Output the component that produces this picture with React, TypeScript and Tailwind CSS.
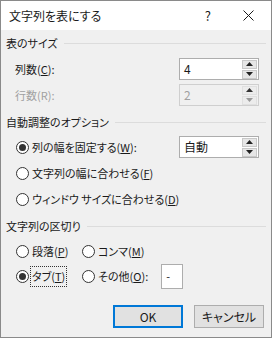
import React from 'react';

const font = "font-['Meiryo_UI','Noto_Sans_CJK_JP',sans-serif] [font-feature-settings:'palt']";

function Radio({ checked = false }: { checked?: boolean }) {
  return (
    <span className="w-[13px] h-[13px] rounded-full border border-[#333] bg-white flex items-center justify-center shrink-0">
      {checked && <span className="w-[7px] h-[7px] rounded-full bg-[#333]"></span>}
    </span>
  );
}

function GroupHeader({ label, className }: { label: string; className?: string }) {
  return (
    <div className={`flex items-center pl-[5px] pr-[5px] ${className ?? ''}`}>
      <span className="text-[#1a1a1a] mr-[6px]">{label}</span>
      <div className="flex-1 h-px bg-[#dcdcdc]"></div>
    </div>
  );
}

function Spin({ disabled = false }: { disabled?: boolean }) {
  return (
    <div className="flex flex-col w-[15px] h-[19px] gap-[1px] mr-[1px]">
      <div className={`flex-1 flex items-center justify-center border ${disabled ? 'border-[#e0e0e0] bg-[#ececec]' : 'border-[#c8c8c8] bg-[#e6e6e6]'}`}>
        <svg width="7" height="4" viewBox="0 0 7 4">
          <path d="M0 4 L3.5 0 L7 4 Z" fill={disabled ? '#333' : '#222'} />
        </svg>
      </div>
      <div className={`flex-1 flex items-center justify-center border ${disabled ? 'border-[#e0e0e0] bg-[#ececec]' : 'border-[#c8c8c8] bg-[#e6e6e6]'}`}>
        <svg width="7" height="4" viewBox="0 0 7 4">
          <path d="M0 0 L7 0 L3.5 4 Z" fill={disabled ? '#9a9a9a' : '#222'} />
        </svg>
      </div>
    </div>
  );
}

function SpinBox({ value, disabled = false }: { value: string; disabled?: boolean }) {
  return (
    <div className={`w-[80px] h-[22px] border flex items-center text-[12px] ${disabled ? 'border-[#cfcfcf] bg-[#f0f0f0] text-[#a0a0a0]' : 'border-[#adadad] bg-white text-[#1a1a1a]'}`}>
      <span className="flex-1 pl-[4px]">{value}</span>
      <Spin disabled={disabled} />
    </div>
  );
}

export default function App() {
  return (
    <div className={`w-[272px] h-[338px] border border-[#8a8a8a] bg-[#f0f0f0] flex flex-col text-[11px] leading-none ${font}`}>
      {/* Title bar */}
      <div className="h-[29px] bg-white flex items-center pl-[8px] text-[#1a1a1a]">
        <span className="text-[12px]">文字列を表にする</span>
        <span className="ml-auto mr-[32px] text-[13px]">?</span>
        <svg width="11" height="11" viewBox="0 0 11 11" className="mr-[17px]">
          <path d="M0.5 0.5 L10.5 10.5 M10.5 0.5 L0.5 10.5" stroke="#1a1a1a" strokeWidth="1" />
        </svg>
      </div>

      <GroupHeader label="表のサイズ" className="h-[26px]" />

      <div className="mt-[2px] flex items-center pl-[14px] pr-[12px]">
        <span className="text-[#1a1a1a]">列数(<u>C</u>):</span>
        <div className="ml-auto"><SpinBox value="4" /></div>
      </div>
      <div className="mt-[4px] flex items-center pl-[14px] pr-[12px]">
        <span className="text-[#a0a0a0]">行数(R):</span>
        <div className="ml-auto"><SpinBox value="2" disabled /></div>
      </div>

      <GroupHeader label="自動調整のオプション" className="mt-[6px] h-[20px]" />

      <div className="mt-[4px] flex items-center pl-[15px] pr-[12px]">
        <Radio checked />
        <span className="ml-[3px] text-[#1a1a1a]">列の幅を固定する(<u>W</u>):</span>
        <div className="ml-auto"><SpinBox value="自動" /></div>
      </div>
      <div className="mt-[5px] h-[20px] flex items-center pl-[15px]">
        <Radio />
        <span className="ml-[3px] text-[#1a1a1a]">文字列の幅に合わせる(<u>F</u>)</span>
      </div>
      <div className="mt-[6px] h-[20px] flex items-center pl-[15px]">
        <Radio />
        <span className="ml-[3px] text-[#1a1a1a]">ウィンドウ サイズに合わせる(<u>D</u>)</span>
      </div>

      <GroupHeader label="文字列の区切り" className="mt-[7px] h-[20px]" />

      <div className="mt-[5px] h-[20px] flex items-center pl-[15px]">
        <div className="w-[66px] flex items-center">
          <Radio />
          <span className="ml-[3px] text-[#1a1a1a]">段落(<u>P</u>)</span>
        </div>
        <Radio />
        <span className="ml-[3px] text-[#1a1a1a]">コンマ(<u>M</u>)</span>
      </div>
      <div className="mt-[3px] h-[25px] flex items-center pl-[15px]">
        <div className="w-[66px] flex items-center">
          <Radio checked />
          <span className="ml-[1px] px-[1px] py-[4px] border border-dotted border-[#333] text-[#1a1a1a]">タブ(<u>T</u>)</span>
        </div>
        <Radio />
        <span className="ml-[3px] text-[#1a1a1a]">その他(<u>O</u>):</span>
        <div className="ml-[13px] w-[22px] h-[25px] border border-[#adadad] bg-white flex items-center pl-[4px] text-[#1a1a1a]">-</div>
      </div>

      <div className="mt-[16px] flex justify-end gap-[11px] pr-[7px] text-[12px]">
        <button className="w-[70px] h-[23px] border-2 border-[#0078d7] bg-[#e1e1e1] text-[#1a1a1a] flex items-center justify-center">OK</button>
        <button className="w-[70px] h-[23px] border border-[#adadad] bg-[#e1e1e1] text-[#1a1a1a] flex items-center justify-center">キャンセル</button>
      </div>
    </div>
  );
}
